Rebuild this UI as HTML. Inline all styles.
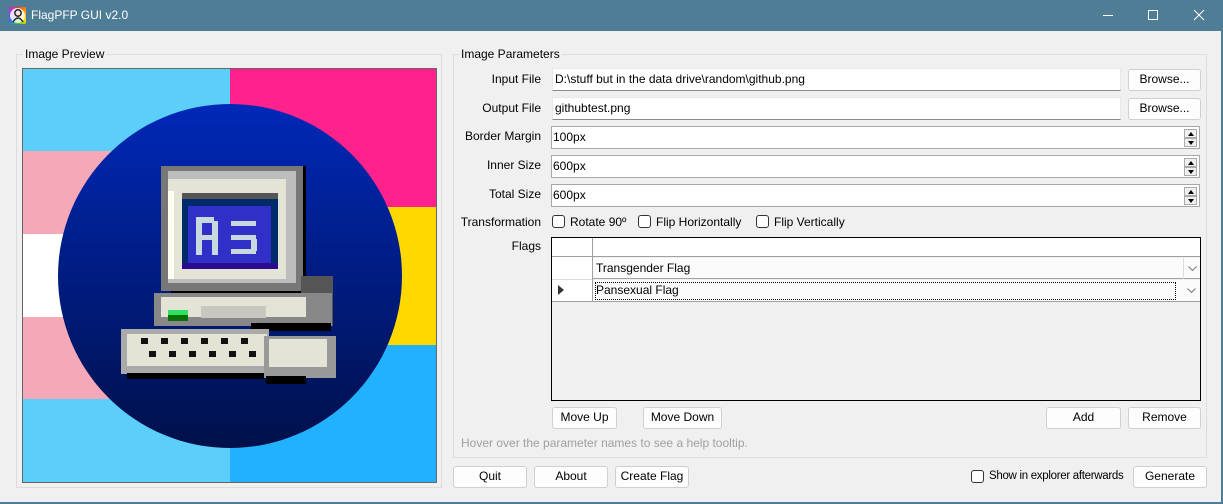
<!DOCTYPE html>
<html><head><meta charset="utf-8"><style>
*{box-sizing:border-box;margin:0;padding:0}
body{width:1223px;height:504px;overflow:hidden;background:#4f7d96;font-family:"Segoe UI","Liberation Sans",sans-serif;font-size:12px;color:#000;position:relative}
.a{position:absolute}
#client{left:0;top:31px;width:1221px;height:471px;background:#f0f0f0}
.gb{position:absolute;border:1px solid #dcdcdc}
.gl{position:absolute;background:#f0f0f0;padding:0 2px;font-size:12px;line-height:14px}
.lbl{position:absolute;width:100px;text-align:right;font-size:12px;line-height:14px}
.tb{position:absolute;background:#fff;border:1px solid #e8e8e8;border-bottom:1px solid #8a8a8a;font-size:12px;line-height:20px;padding-left:2px}
.nb{position:absolute;background:#fff;border:1px solid #a8a8a8;font-size:12px;line-height:20px;padding-left:1px}
.btn{position:absolute;background:#fdfdfd;border:1px solid #d0d0d0;border-radius:3px;text-align:center;font-size:12px;line-height:19px}
.cb{position:absolute;width:13px;height:13px;border:1px solid #333;border-radius:3px;background:#fff}
.sp{position:absolute;right:2px;width:13px;height:9px;border:1px solid #aaa;background:#f0f0f0}
.sp svg{position:absolute;left:3px;top:2px}
</style></head><body>
<div class="a" style="left:9px;top:7px;width:17px;height:17px;background:conic-gradient(#e33,#f90,#fd0,#3c3,#36f,#a3f,#e33);border-radius:2px"></div>
<div class="a" style="left:10px;top:8px;width:15px;height:15px;background:#fff;border-radius:50%;opacity:.85"></div>
<svg class="a" style="left:10px;top:7px" width="16" height="16"><circle cx="8" cy="6" r="3.2" fill="none" stroke="#222" stroke-width="1.5"/><path d="M3 15 Q8 7 13 15" fill="none" stroke="#222" stroke-width="1.5"/></svg>
<div class="a" style="left:31px;top:7px;color:#fff;font-size:12px;line-height:16px">FlagPFP GUI v2.0</div>
<div class="a" style="left:1103px;top:15px;width:10px;height:1px;background:#fff"></div>
<div class="a" style="left:1148px;top:10px;width:10px;height:10px;border:1px solid #fff"></div>
<svg class="a" style="left:1193px;top:9px" width="12" height="12"><path d="M1 1L11 11M11 1L1 11" stroke="#fff" stroke-width="1"/></svg>

<div id="client" class="a"></div>

<div class="gb" style="left:16px;top:54px;width:426px;height:434px"></div>
<div class="gl" style="left:23px;top:47px">Image Preview</div>
<div class="a" style="left:22px;top:68px;width:415px;height:415px;border:1px solid #666;overflow:hidden">
<svg width="415" height="415" viewBox="22 68 415 415" style="display:block">
<defs><linearGradient id="g" x1="0" y1="0" x2="0" y2="1"><stop offset="0" stop-color="#0028b8"/><stop offset="1" stop-color="#00104a"/></linearGradient></defs>
<rect x="22" y="68" width="207" height="83" fill="#5bcefa"/>
<rect x="22" y="150" width="207" height="83" fill="#f5a9b8"/>
<rect x="22" y="233" width="207" height="83" fill="#ffffff"/>
<rect x="22" y="316" width="207" height="83" fill="#f5a9b8"/>
<rect x="22" y="398" width="207" height="85" fill="#5bcefa"/>
<rect x="229" y="68" width="208" height="138" fill="#ff218c"/>
<rect x="229" y="206" width="208" height="138" fill="#ffd800"/>
<rect x="229" y="344" width="208" height="139" fill="#21b1ff"/>
<circle cx="229" cy="275" r="172" fill="url(#g)"/>
<rect x="170" y="165" width="135" height="130" fill="#000"/>
<rect x="160" y="165" width="142" height="125" fill="#777"/>
<rect x="167" y="170" width="128" height="112" fill="#bdbdbd"/>
<rect x="167" y="178" width="118" height="100" fill="#e4e4d6"/>
<rect x="167" y="190" width="6" height="88" fill="#fffff4"/>
<rect x="181" y="192" width="96" height="76" fill="#555"/>
<rect x="181" y="198" width="96" height="70" fill="#002a6a"/>
<rect x="187" y="205" width="83" height="58" fill="#3030c8"/>
<rect x="181" y="262" width="96" height="6" fill="#2a0a90"/>
<rect x="195" y="220" width="6" height="34" fill="#c8d8e0"/><rect x="195" y="216" width="18" height="6" fill="#c8d8e0"/><rect x="211" y="220" width="6" height="34" fill="#c8d8e0"/><rect x="195" y="234" width="20" height="5" fill="#c8d8e0"/>
<rect x="230" y="220" width="25" height="5" fill="#c8d8e0"/><rect x="230" y="234" width="25" height="5" fill="#c8d8e0"/><rect x="230" y="248" width="25" height="5" fill="#c8d8e0"/><rect x="250" y="238" width="6" height="12" fill="#c8d8e0"/>
<rect x="300" y="275" width="32" height="50" fill="#555"/>
<rect x="153" y="292" width="178" height="33" fill="#888"/>
<rect x="160" y="296" width="145" height="20" fill="#e4e4d6"/>
<rect x="200" y="305" width="65" height="12" fill="#c8c8c0"/>
<rect x="167" y="309" width="20" height="11" fill="#087008"/><rect x="167" y="309" width="20" height="5" fill="#30e060"/>
<rect x="250" y="322" width="80" height="8" fill="#000"/>
<rect x="120" y="328" width="148" height="45" fill="#aaa"/>
<rect x="126" y="333" width="140" height="32" fill="#e4e4d6"/>
<g fill="#111"><rect x="140" y="337" width="7" height="6"/><rect x="160" y="337" width="7" height="6"/><rect x="180" y="337" width="7" height="6"/><rect x="200" y="337" width="7" height="6"/><rect x="220" y="337" width="7" height="6"/><rect x="240" y="337" width="7" height="6"/><rect x="148" y="350" width="7" height="6"/><rect x="168" y="350" width="7" height="6"/><rect x="188" y="350" width="7" height="6"/><rect x="208" y="350" width="7" height="6"/><rect x="228" y="350" width="7" height="6"/><rect x="248" y="350" width="7" height="6"/></g>
<rect x="126" y="372" width="145" height="6" fill="#000"/>
<rect x="263" y="335" width="72" height="42" fill="#999"/>
<rect x="268" y="338" width="58" height="28" fill="#e4e4d6"/>
<rect x="265" y="375" width="40" height="8" fill="#000"/>
</svg></div>

<div class="gb" style="left:453px;top:54px;width:754px;height:404px"></div>
<div class="gl" style="left:459px;top:47px">Image Parameters</div>

<div class="lbl" style="left:441px;top:72px">Input File</div>
<div class="tb" style="left:552px;top:68px;width:569px;height:23px">D:\stuff but in the data drive\random\github.png</div>
<div class="btn" style="left:1128px;top:69px;width:73px;height:22px">Browse...</div>
<div class="lbl" style="left:441px;top:101px">Output File</div>
<div class="tb" style="left:552px;top:97px;width:569px;height:23px">githubtest.png</div>
<div class="btn" style="left:1128px;top:98px;width:73px;height:22px">Browse...</div>

<div class="lbl" style="left:441px;top:129px">Border Margin</div>
<div class="nb" style="left:551px;top:126px;width:649px;height:23px">100px<div class="sp" style="top:2px"><svg width="6" height="4"><path d="M0 4L3 0L6 4Z" fill="#000"/></svg></div><div class="sp" style="top:11px"><svg width="6" height="4"><path d="M0 0L3 4L6 0Z" fill="#000"/></svg></div></div>
<div class="lbl" style="left:441px;top:158px">Inner Size</div>
<div class="nb" style="left:551px;top:155px;width:649px;height:23px">600px<div class="sp" style="top:2px"><svg width="6" height="4"><path d="M0 4L3 0L6 4Z" fill="#000"/></svg></div><div class="sp" style="top:11px"><svg width="6" height="4"><path d="M0 0L3 4L6 0Z" fill="#000"/></svg></div></div>
<div class="lbl" style="left:441px;top:187px">Total Size</div>
<div class="nb" style="left:551px;top:184px;width:649px;height:23px">600px<div class="sp" style="top:2px"><svg width="6" height="4"><path d="M0 4L3 0L6 4Z" fill="#000"/></svg></div><div class="sp" style="top:11px"><svg width="6" height="4"><path d="M0 0L3 4L6 0Z" fill="#000"/></svg></div></div>

<div class="lbl" style="left:441px;top:215px">Transformation</div>
<div class="cb" style="left:552px;top:215px"></div><div class="a" style="left:570px;top:215px;line-height:14px">Rotate 90º</div>
<div class="cb" style="left:638px;top:215px"></div><div class="a" style="left:656px;top:215px;line-height:14px">Flip Horizontally</div>
<div class="cb" style="left:756px;top:215px"></div><div class="a" style="left:774px;top:215px;line-height:14px">Flip Vertically</div>

<div class="lbl" style="left:441px;top:239px">Flags</div>
<div class="a" style="left:551px;top:237px;width:650px;height:164px;border:1px solid #000;background:#f0f0f0">
 <div class="a" style="left:0;top:0;width:648px;height:19px;background:#fff;border-bottom:1px solid #a0a0a0"></div>
 <div class="a" style="left:40px;top:0;width:1px;height:64px;background:#a0a0a0"></div>
 <div class="a" style="left:0;top:19px;width:40px;height:45px;background:#fff"></div>
 <div class="a" style="left:0;top:41px;width:40px;height:1px;background:#ddd"></div>
 <div class="a" style="left:0;top:63px;width:648px;height:1px;background:#a0a0a0"></div>
 <div class="a" style="left:41px;top:20px;width:607px;height:21px;background:#fbfbfb;border-bottom:1px solid #a0a0a0;line-height:20px;padding-left:3px">Transgender Flag<div class="a" style="right:0;top:0;width:17px;height:21px;border-left:1px solid #ddd"><svg class="a" style="left:4px;top:8px" width="9" height="5"><path d="M0.5 0.5L4.5 4.5L8.5 0.5" fill="none" stroke="#777"/></svg></div></div>
 <div class="a" style="left:41px;top:42px;width:607px;height:21px;background:#fbfbfb;line-height:21px;padding-left:3px"><div class="a" style="left:2px;top:2px;width:581px;height:18px;border:1px dotted #000"></div>Pansexual Flag<div class="a" style="right:0;top:0;width:17px;height:21px"><svg class="a" style="left:4px;top:8px" width="9" height="5"><path d="M0.5 0.5L4.5 4.5L8.5 0.5" fill="none" stroke="#777"/></svg></div></div>
 <svg class="a" style="left:6px;top:47px" width="6" height="10"><path d="M0 0L6 5L0 10Z" fill="#333"/></svg>
</div>

<div class="btn" style="left:552px;top:407px;width:65px;height:22px">Move Up</div>
<div class="btn" style="left:643px;top:407px;width:79px;height:22px">Move Down</div>
<div class="btn" style="left:1046px;top:407px;width:75px;height:22px">Add</div>
<div class="btn" style="left:1128px;top:407px;width:73px;height:22px">Remove</div>
<div class="a" style="left:461px;top:436px;color:#a0a0a0;line-height:14px">Hover over the parameter names to see a help tooltip.</div>

<div class="btn" style="left:453px;top:466px;width:74px;height:22px">Quit</div>
<div class="btn" style="left:534px;top:466px;width:74px;height:22px">About</div>
<div class="btn" style="left:615px;top:466px;width:74px;height:22px">Create Flag</div>
<div class="cb" style="left:971px;top:470px"></div>
<div class="a" style="left:989px;top:469px;line-height:14px;font-size:11.5px;letter-spacing:-0.3px">Show in explorer afterwards</div>
<div class="btn" style="left:1133px;top:466px;width:74px;height:22px">Generate</div>
</body></html>
